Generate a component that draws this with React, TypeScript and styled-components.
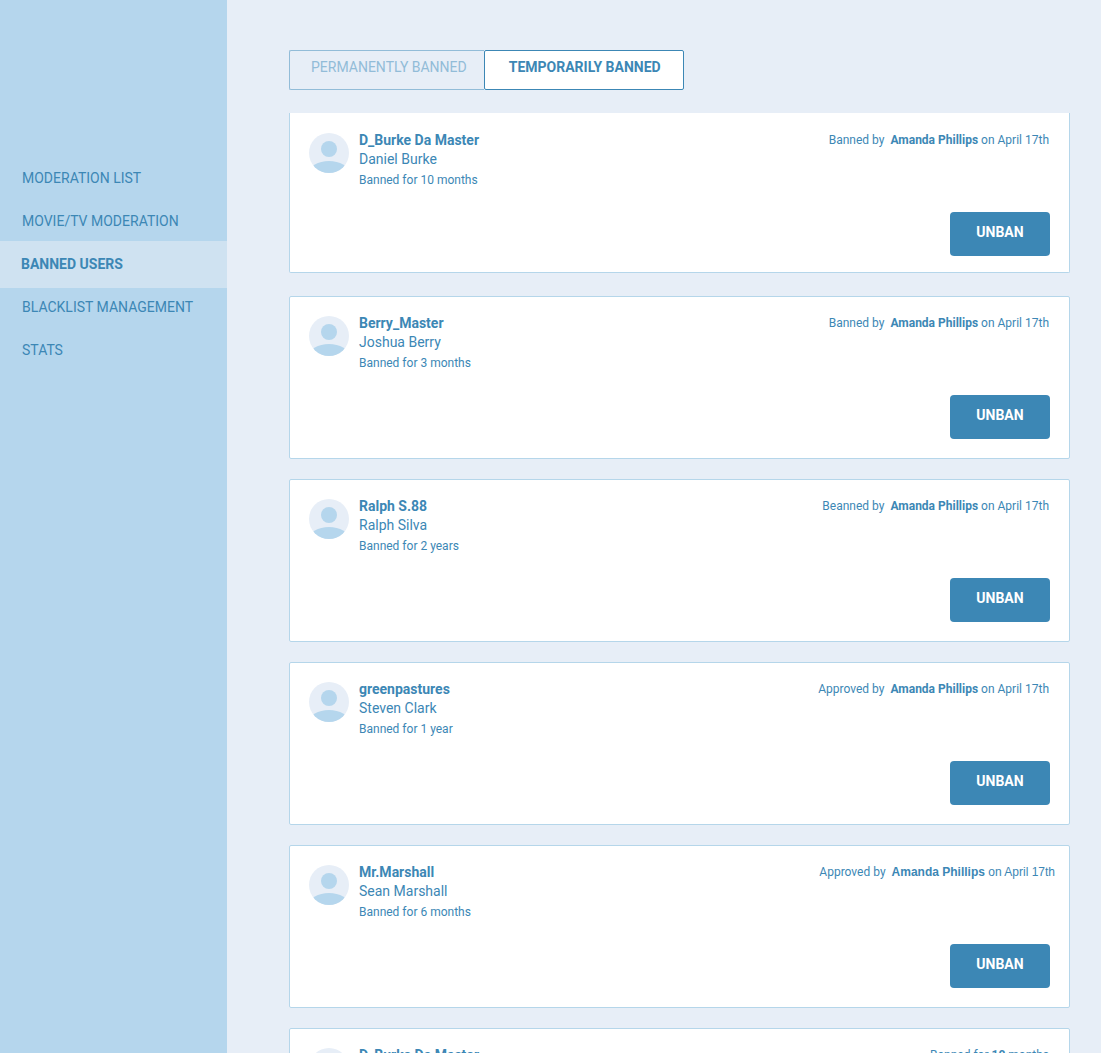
import React from "react";
import styled, { createGlobalStyle, css } from "styled-components";

const color = {
  page: "#e7eef7",
  sidebar: "#b5d6ed",
  active: "#cfe2f1",
  ink: "#3c87b5",
  muted: "#92bcd8",
  line: "#b5d6ea",
  card: "#ffffff",
};

const GlobalStyle = createGlobalStyle`
  * { box-sizing: border-box; }
  body {
    margin: 0;
    background: ${color.page};
    color: ${color.ink};
    font-family: Roboto, "Liberation Sans", sans-serif;
    font-size: 14px;
  }
`;

const Shell = styled.div`
  display: flex;
  height: 100vh;
`;

const Sidebar = styled.nav`
  flex: none;
  width: 227px;
  padding-top: 157px;
  background: ${color.sidebar};
`;

const NavList = styled.ul`
  margin: 0;
  padding: 0;
  list-style: none;
`;

const NavLink = styled.a<{ $active?: boolean }>`
  display: flex;
  align-items: center;
  height: 43px;
  padding: 0 22px 2px;
  color: ${color.ink};
  text-decoration: none;
  white-space: nowrap;
  ${(p) =>
    p.$active &&
    css`
      height: 47px;
      margin: -2px 0;
      padding-left: 21px;
      background: ${color.active};
      font-weight: 700;
    `}
`;

const Main = styled.main`
  flex: 1;
  min-width: 0;
  display: flex;
  flex-direction: column;
  padding: 50px 31px 0 62px;
`;

const Tabs = styled.div`
  flex: none;
  display: flex;
  margin-bottom: 23px;
`;

const Tab = styled.button<{ $active?: boolean }>`
  height: 40px;
  padding: 0 17px 6px 21px;
  border: 1px solid ${color.muted};
  border-right: 0;
  border-radius: 2px 0 0 2px;
  background: transparent;
  color: ${color.muted};
  font: inherit;
  cursor: pointer;
  ${(p) =>
    p.$active &&
    css`
      padding: 0 22px 6px 24px;
      border: 1px solid ${color.ink};
      border-radius: 2px;
      background: ${color.card};
      color: ${color.ink};
      font-weight: 700;
    `}
`;

const List = styled.div`
  flex: 1;
  min-height: 0;
  overflow-y: auto;
  scrollbar-width: none;
`;

const Card = styled.article`
  display: flex;
  flex-direction: column;
  height: 163px;
  margin-bottom: 20px;
  padding: 19px;
  border: 1px solid ${color.line};
  border-radius: 2px;
  background: ${color.card};

  &:first-child {
    height: 160px;
    margin-bottom: 23px;
    padding: 20px 19px 16px;
    border-top: 0;
    border-radius: 0 0 2px 2px;
  }
`;

const CardTop = styled.div`
  flex: 1;
  display: flex;
  align-items: flex-start;
`;

const Avatar = styled.svg`
  flex: none;
  width: 40px;
  height: 40px;
  margin-right: 10px;
`;

const Person = styled.div`
  flex: 1;
  margin-top: -2px;
`;

const Username = styled.h2`
  margin: 0;
  font-size: 14px;
  line-height: 19px;
  font-weight: 700;
`;

const FullName = styled.p`
  margin: 0;
  line-height: 19px;
`;

const Duration = styled.p`
  margin: 3px 0 0;
  font-size: 12px;
  line-height: 16px;
`;

const Byline = styled.p<{ $fallback?: boolean }>`
  display: flex;
  gap: 6px;
  margin: 0 ${(p) => (p.$fallback ? "-5px" : "1px")} 0 0;
  font-size: 12px;
  line-height: 14px;
  white-space: nowrap;

  span + span {
    font-family: ${(p) => (p.$fallback ? '"Liberation Sans", sans-serif' : "inherit")};
  }
`;

const Unban = styled.button`
  align-self: flex-end;
  flex: none;
  width: 100px;
  height: 44px;
  padding: 0 0 4px;
  border: 0;
  border-radius: 4px;
  background: ${color.ink};
  color: #fff;
  font: inherit;
  font-weight: 700;
  cursor: pointer;
`;

const nav = [
  "MODERATION LIST",
  "MOVIE/TV MODERATION",
  "BANNED USERS",
  "BLACKLIST MANAGEMENT",
  "STATS",
];

type User = {
  username: string;
  name: string;
  duration: string;
  action?: string;
  fallback?: boolean;
};

const users: User[] = [
  { username: "D_Burke Da Master", name: "Daniel Burke", duration: "10 months", action: "Banned by" },
  { username: "Berry_Master", name: "Joshua Berry", duration: "3 months", action: "Banned by" },
  { username: "Ralph S.88", name: "Ralph Silva", duration: "2 years", action: "Beanned by" },
  { username: "greenpastures", name: "Steven Clark", duration: "1 year", action: "Approved by" },
  { username: "Mr.Marshall", name: "Sean Marshall", duration: "6 months", action: "Approved by", fallback: true },
  { username: "D_Burke Da Master", name: "Daniel Burke", duration: "10 months" },
];

function UserAvatar({ id }: { id: string }) {
  return (
    <Avatar viewBox="0 0 40 40" aria-hidden="true">
      <clipPath id={id}>
        <circle cx="20" cy="20" r="20" />
      </clipPath>
      <circle cx="20" cy="20" r="20" fill={color.page} />
      <circle cx="20" cy="16" r="8" fill={color.sidebar} />
      <ellipse cx="20" cy="40" rx="20" ry="12" fill={color.sidebar} clipPath={`url(#${id})`} />
    </Avatar>
  );
}

function UserCard({ user, id }: { user: User; id: string }) {
  return (
    <Card>
      <CardTop>
        <UserAvatar id={id} />
        <Person>
          <Username>{user.username}</Username>
          <FullName>{user.name}</FullName>
          <Duration>Banned for {user.duration}</Duration>
        </Person>
        {user.action ? (
          <Byline $fallback={user.fallback}>
            <span>{user.action}</span>
            <span>
              <b>Amanda Phillips</b> on April 17th
            </span>
          </Byline>
        ) : (
          <Byline>
            <span>
              Banned for <b>10</b> months
            </span>
          </Byline>
        )}
      </CardTop>
      <Unban type="button">UNBAN</Unban>
    </Card>
  );
}

export default function App() {
  return (
    <>
      <GlobalStyle />
      <Shell>
        <Sidebar aria-label="Moderation">
          <NavList>
            {nav.map((label) => (
              <li key={label}>
                <NavLink href="#" $active={label === "BANNED USERS"}>
                  {label}
                </NavLink>
              </li>
            ))}
          </NavList>
        </Sidebar>
        <Main>
          <Tabs role="tablist">
            <Tab type="button" role="tab" aria-selected={false}>
              PERMANENTLY BANNED
            </Tab>
            <Tab type="button" role="tab" aria-selected $active>
              TEMPORARILY BANNED
            </Tab>
          </Tabs>
          <List>
            {users.map((user, i) => (
              <UserCard key={i} user={user} id={`avatar-${i}`} />
            ))}
          </List>
        </Main>
      </Shell>
    </>
  );
}
